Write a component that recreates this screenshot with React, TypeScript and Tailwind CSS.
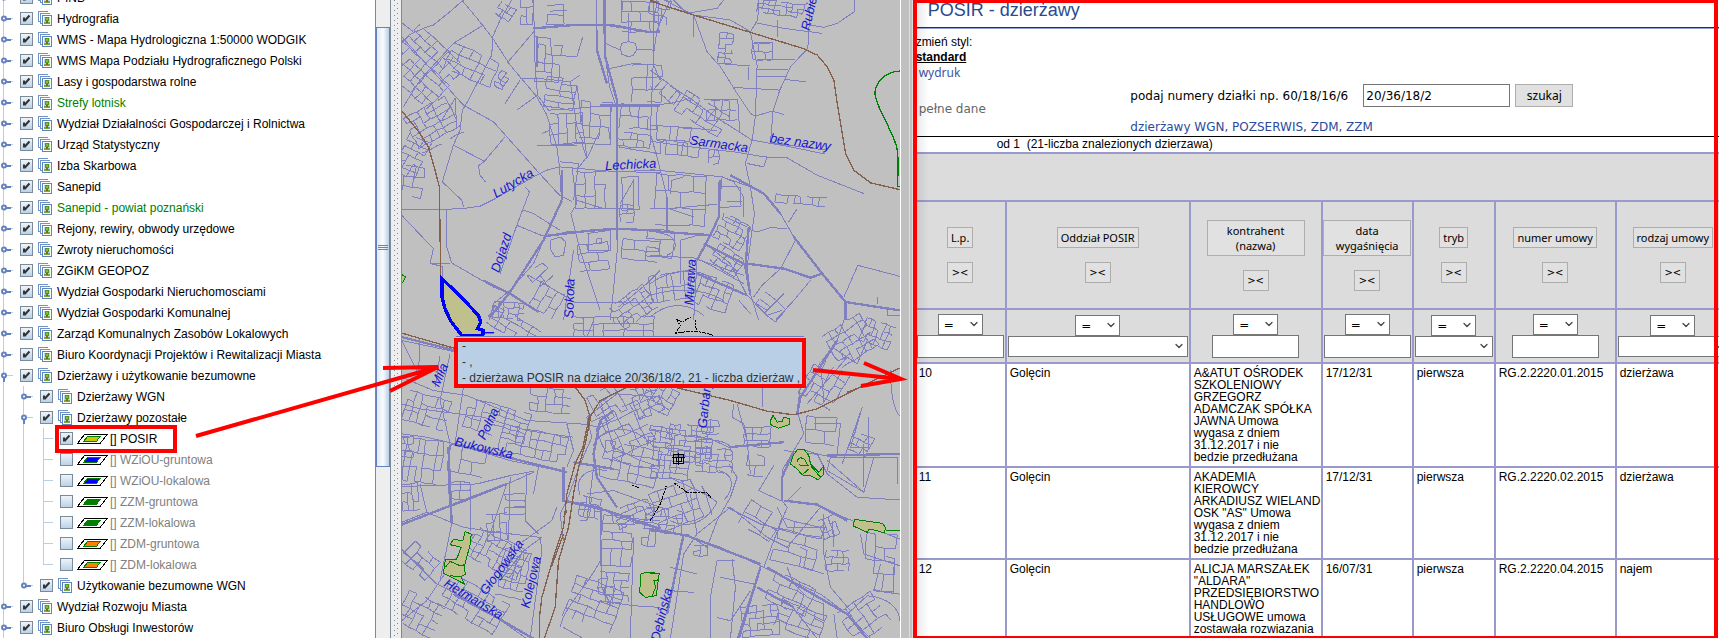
import React from "react";
import { ChevronDown } from "lucide-react";

type TreeItem = {
  label: string;
  depth: 0 | 1 | 2;
  open?: boolean;
  green?: boolean;
  fill?: string;
  off?: boolean;
  last?: boolean;
  marked?: boolean;
};

const tree: TreeItem[] = [
  { label: "PINB", depth: 0 },
  { label: "Hydrografia", depth: 0 },
  { label: "WMS - Mapa Hydrologiczna 1:50000 WODGIK", depth: 0 },
  { label: "WMS Mapa Podziału Hydrograficznego Polski", depth: 0 },
  { label: "Lasy i gospodarstwa rolne", depth: 0 },
  { label: "Strefy lotnisk", depth: 0, green: true },
  { label: "Wydział Działalności Gospodarczej i Rolnictwa", depth: 0 },
  { label: "Urząd Statystyczny", depth: 0 },
  { label: "Izba Skarbowa", depth: 0 },
  { label: "Sanepid", depth: 0 },
  { label: "Sanepid - powiat poznański", depth: 0, green: true },
  { label: "Rejony, rewiry, obwody urzędowe", depth: 0 },
  { label: "Zwroty nieruchomości", depth: 0 },
  { label: "ZGiKM GEOPOZ", depth: 0 },
  { label: "Wydział Gospodarki Nieruchomosciami", depth: 0 },
  { label: "Wydział Gospodarki Komunalnej", depth: 0 },
  { label: "Zarząd Komunalnych Zasobów Lokalowych", depth: 0 },
  { label: "Biuro Koordynacji Projektów i Rewitalizacji Miasta", depth: 0 },
  { label: "Dzierżawy i użytkowanie bezumowne", depth: 0, open: true },
  { label: "Dzierżawy WGN", depth: 1 },
  { label: "Dzierżawy pozostałe", depth: 1, open: true },
  { label: "[] POSIR", depth: 2, fill: "#c8c800", marked: true },
  { label: "[] WZiOU-gruntowa", depth: 2, fill: "#0000ff", off: true },
  { label: "[] WZiOU-lokalowa", depth: 2, fill: "#0000ff", off: true },
  { label: "[] ZZM-gruntowa", depth: 2, fill: "#008000", off: true },
  { label: "[] ZZM-lokalowa", depth: 2, fill: "#008000", off: true },
  { label: "[] ZDM-gruntowa", depth: 2, fill: "#ff8000", off: true },
  { label: "[] ZDM-lokalowa", depth: 2, fill: "#ff8000", off: true, last: true },
  { label: "Użytkowanie bezumowne WGN", depth: 1, last: true },
  { label: "Wydział Rozwoju Miasta", depth: 0 },
  { label: "Biuro Obsługi Inwestorów", depth: 0 },
];

function Guide({ kind, last, open }: { kind: "line" | "node" | "leaf"; last?: boolean; open?: boolean }) {
  return (
    <svg className="h-[21px] w-5 shrink-0" viewBox="0 0 20 21" shapeRendering="crispEdges" aria-hidden="true">
      <path d={last ? "M3.5 0V10.5" : "M3.5 0V21"} stroke="#b8cfe5" />
      {kind !== "line" && <path d="M4 10.5H12.500" stroke="#b8cfe5" />}
      {kind === "node" && (
        <>
          <path d={open ? "M4 12V17" : "M6 10.500H11"} stroke="#6382bf" strokeWidth="2" />
          <circle cx="4" cy="10.500" r="2" fill="#fff" stroke="#6382bf" strokeWidth="2" shapeRendering="auto" />
        </>
      )}
    </svg>
  );
}

function LayersIcon() {
  return (
    <svg className="h-[15px] w-[14px] shrink-0" viewBox="0 0 14 15" shapeRendering="crispEdges" aria-hidden="true">
      <path d="M0.500 10.500V.5H9.500M.5 10.500H2" fill="none" stroke="#6f93c4" />
      <path d="M2.500 12.500V2.500H11.500M2.500 12.500H4" fill="none" stroke="#6f93c4" />
      <rect x="4.500" y="4.500" width="9" height="10" fill="#fff" stroke="#6382bf" />
      <rect x="6" y="6" width="6" height="7" fill="#b9d6f2" />
      <rect x="7" y="6" width="4" height="4" fill="#4d9a1c" />
      <rect x="8" y="7" width="2" height="2" fill="#86c03a" />
      <rect x="6" y="11" width="6" height="2" fill="#6fae3a" />
      <rect x="8" y="10" width="2" height="2" fill="#9a5a1c" />
    </svg>
  );
}

function ParcelIcon({ fill }: { fill: string }) {
  return (
    <svg className="h-[10px] w-[31px] shrink-0" viewBox="0 0 31 10" shapeRendering="crispEdges" aria-hidden="true">
      <path d="M7.500 .5H30L23.500 9H.8Z" fill="#fff" stroke="#000" />
      <path d="M10.500 2.500H23L19.500 7.500H6.500Z" fill={fill} stroke="#008000" />
    </svg>
  );
}

function TreeRow({ item }: { item: TreeItem }) {
  const color = item.off ? "text-[#808080]" : item.green ? "text-[#008000]" : "text-black";
  return (
    <li className="flex h-[21px] items-center">
      {item.depth > 0 && <Guide kind="line" />}
      {item.depth > 1 && <Guide kind="line" />}
      <Guide kind={item.depth === 2 ? "leaf" : "node"} last={item.last} open={item.open} />
      <label className="relative flex items-center">
        <span className="relative flex h-[13px] w-[13px]">
          <input
            type="checkbox"
            defaultChecked={!item.off}
            className="peer h-[13px] w-[13px] appearance-none border border-[#7a8a99] bg-linear-to-b from-[#eef4f9] to-[#bcd2e8]"
          />
          <svg className="pointer-events-none absolute inset-0 hidden peer-checked:block" viewBox="0 0 13 13" aria-hidden="true">
            <path d="M4 5.500V9.500M4.500 9 9.500 3.500" fill="none" stroke="#333" strokeWidth="2" />
          </svg>
        </span>
        <span className={item.fill ? "ml-1" : "ml-[5px]"}>{item.fill ? <ParcelIcon fill={item.fill} /> : <LayersIcon />}</span>
        <span className={`${item.fill ? "ml-0.5" : "ml-[5px]"} whitespace-nowrap ${color}`}>{item.label}</span>
        {item.marked && <span className="pointer-events-none absolute -top-1.5 -right-5 -bottom-1.5 -left-[5px] border-4 border-[#ff0000]" />}
      </label>
    </li>
  );
}

type Block = [cx: number, cy: number, w: number, h: number, angle: number, nx: number, ny: number];

// Builds a patch of side streets: a rotated grid in which some segments are left out.
function streets([cx, cy, w, h, angle, nx, ny]: Block): string {
  const a = (angle * Math.PI) / 180;
  const point = (i: number, j: number) => {
    const wob = ((i * 7 + j * 13 + nx) % 5) - 2;
    const x = (i / nx - 0.5) * w + wob;
    const y = (j / ny - 0.5) * h - wob;
    return `${Math.round(cx + x * Math.cos(a) - y * Math.sin(a))} ${Math.round(cy + x * Math.sin(a) + y * Math.cos(a))}`;
  };
  let d = "";
  for (let i = 0; i <= nx; i++) {
    for (let j = 0; j <= ny; j++) {
      const k = (i * 31 + j * 17 + i * j * 5 + Math.abs(cx)) % 7;
      if (i < nx && k !== 0) d += `M${point(i, j)}L${point(i + 1, j)}`;
      if (j < ny && k !== 3 && k !== 5) d += `M${point(i, j)}L${point(i, j + 1)}`;
    }
  }
  return d;
}

const northWest: Block[] = [
  [70, 200, 190, 170, 43, 8, 7], [215, 195, 150, 80, 25, 5, 3], [100, 375, 140, 120, -28, 6, 6], [35, 470, 70, 120, 25, 3, 6],
  [40, 545, 60, 90, 8, 2, 3], [380, 35, 36, 76, 0, 2, 3], [315, 35, 50, 40, 30, 3, 2], [305, 240, 30, 50, 30, 2, 4],
  [465, 45, 50, 60, 0, 1, 2], [720, 50, 110, 90, 0, 4, 3], [445, 190, 70, 110, 5, 3, 4], [480, 280, 90, 90, 8, 2, 5],
  [500, 385, 100, 90, -3, 4, 3], [585, 360, 90, 110, 4, 3, 3], [715, 350, 110, 70, 3, 4, 2], [700, 420, 100, 40, 5, 5, 2],
  [570, 570, 90, 110, 0, 3, 3], [690, 580, 50, 100, 0, 1, 2], [420, 825, 60, 50, -40, 2, 2], [325, 930, 90, 50, 5, 6, 3],
  [700, 920, 120, 80, -35, 6, 4], [440, 900, 80, 80, -60, 3, 3], [580, 770, 90, 80, -5, 3, 3], [680, 640, 40, 50, 0, 2, 2],
  [720, 750, 110, 60, 5, 3, 2], [740, 250, 90, 110, 0, 2, 3],
];
const northEast: Block[] = [
  [390, 25, 140, 40, 8, 8, 3], [225, 145, 40, 90, 5, 2, 6], [335, 155, 60, 50, 0, 3, 2], [155, 340, 150, 70, 32, 6, 3],
  [60, 400, 120, 40, 5, 6, 1], [80, 445, 130, 40, 5, 8, 1], [215, 330, 90, 60, 0, 4, 2], [90, 600, 150, 150, 2, 4, 3],
  [245, 695, 90, 80, 28, 5, 4], [240, 590, 60, 60, 0, 2, 1], [190, 880, 100, 90, 20, 5, 3], [60, 860, 120, 80, -8, 7, 2],
  [450, 600, 150, 24, 5, 8, 1], [25, 35, 60, 70, 10, 3, 3], [45, 270, 90, 40, 38, 5, 1], [230, 780, 90, 60, 35, 5, 3],
  [360, 920, 80, 50, 40, 2, 2], [190, 470, 30, 40, 0, 2, 2], [30, 730, 80, 80, 5, 2, 3],
];
const southWest: Block[] = [
  [80, 270, 130, 90, 16, 6, 3], [60, 420, 130, 130, 8, 7, 3], [290, 300, 190, 90, 16, 8, 3], [400, 370, 200, 80, 12, 9, 3],
  [670, 330, 150, 130, -25, 6, 5], [690, 430, 170, 110, 12, 6, 4], [620, 250, 90, 90, -30, 4, 3], [450, 240, 120, 70, 5, 5, 3],
  [200, 420, 110, 80, 10, 3, 2], [30, 530, 50, 80, -5, 3, 3], [345, 550, 60, 60, 0, 1, 3], [290, 620, 60, 80, -3, 3, 3],
  [180, 510, 60, 50, 0, 2, 2], [290, 700, 170, 90, 28, 9, 4], [220, 850, 190, 100, 30, 8, 4], [60, 720, 100, 70, 40, 4, 3],
  [60, 880, 120, 100, 28, 5, 4], [340, 760, 80, 140, 12, 4, 6], [580, 850, 150, 130, 20, 5, 5], [650, 660, 90, 150, 3, 3, 6],
  [640, 800, 90, 90, 3, 4, 4], [700, 580, 110, 60, -20, 5, 4], [740, 240, 80, 90, -20, 4, 4], [570, 560, 60, 60, 10, 4, 3],
  [640, 20, 240, 60, 0, 8, 3], [340, 20, 160, 60, 30, 5, 3], [745, 650, 40, 50, 5, 2, 2], [20, 380, 40, 60, 0, 3, 3],
];
const southEast: Block[] = [
  [120, 370, 130, 110, 4, 8, 7], [60, 430, 110, 90, 5, 6, 5], [190, 420, 110, 70, 2, 5, 4], [30, 350, 70, 60, 8, 4, 4],
  [90, 550, 160, 120, -20, 6, 4], [40, 600, 110, 70, 8, 5, 3], [600, 60, 130, 110, -32, 6, 5], [520, 190, 120, 110, -60, 5, 4],
  [680, 40, 90, 70, 20, 6, 3], [510, 330, 90, 80, 5, 3, 2], [320, 350, 80, 60, 0, 3, 3], [315, 435, 50, 60, 5, 2, 2],
  [330, 600, 110, 80, 30, 3, 2], [440, 670, 130, 130, 15, 3, 4], [535, 620, 50, 60, -20, 3, 3], [560, 720, 70, 60, 0, 4, 3],
  [630, 370, 60, 60, 25, 3, 3], [690, 680, 90, 80, 5, 3, 2], [420, 820, 130, 90, 25, 5, 3], [330, 900, 110, 90, -5, 5, 5],
  [450, 900, 140, 80, 20, 4, 4], [640, 890, 120, 110, -35, 4, 4], [70, 110, 120, 90, 10, 4, 3], [30, 230, 90, 80, 30, 4, 4],
  [180, 320, 50, 40, 0, 2, 2], [700, 760, 60, 100, 5, 2, 2], [150, 690, 40, 30, 0, 2, 2],
];

const roads = {
  northWest: [
    "M190 0 150 35 100 75 70 85 30 103 5 125M5 68 40 95M185 0 235 60 278 115 330 195 410 290 440 345 455 395 470 440 478 500 484 600",
    "M335 0 300 60 278 110 275 165 205 300 187 330 180 390 160 435 127 545M250 75 160 130 60 240 10 320M405 90 350 155 320 190M5 110 190 315 280 365 418 520 478 585 515 603",
    "M160 435 253 483 315 410M253 483 235 497 240 525 256 545M127 545 185 600 190 620M5 628 180 626 240 618 280 598 400 530 440 510 478 500 560 507 610 512 780 518",
    "M140 628V740L155 788 90 790M155 788 280 860 330 880 415 935M5 645 100 745 90 790 128 798V830M375 560 388 575 350 675 300 820M365 628 400 640 480 690M350 675 430 708",
    "M478 500 484 600 430 720 400 790 330 870 280 910 268 960M515 500 530 610 512 640 540 750 570 840 600 930M440 710 500 695 640 688 780 690M360 235 415 235 510 245 540 225",
    "M400 0 405 200 412 285 350 330M412 285 445 330 530 325 600 318M360 240 315 310M450 390 425 400M478 435 540 430 630 433V320M545 430 560 475 595 400",
    "M530 255 560 470 530 510M510 245 530 380 550 430M480 485 535 490 520 600M405 110 450 115 455 165 530 170 548 110M450 35 470 30 500 32M590 90 590 0M610 0 612 150 628 260 648 320",
    "M665 0V40M685 40V125M665 130 685 125 705 130 710 148 700 165 685 170 665 163 660 145 665 130M615 130 660 150M710 148 760 150V0M630 205 700 190 760 195 780 240M610 75 740 95 780 92",
    "M650 320 652 740 636 905 630 960M410 435H530M560 700 630 690V750H565V700M590 715H605V730H590V715M450 720 480 710 497 725 490 765 465 770 450 745V720M520 905H780M655 920 740 850 780 810M125 360 165 295 170 380",
    "M530 600 610 625 700 625M660 610 700 540V625M655 440 710 450 780 460M520 750 490 960M385 825 430 850 500 890M700 510H780",
  ],
  northEast: [
    "M60 0 20 90 10 160 0 400 20 470 50 590M130 45 170 155 210 200 260 280 300 340 315 348 365 333 400 343M325 0 322 60 300 95 320 195 315 348 305 420 285 490 300 560 312 640 290 800 300 880 325 960",
    "M40 0 130 45 240 60 300 95M70 0 110 40 200 25 220 0M315 68 400 85 515 100M480 0 472 145 420 200 388 270 368 333 360 428M612 0V35L560 70 520 82 480 75",
    "M300 198 200 190M310 128H365V178M320 178H435M316 207H412M320 228H405M405 238 465 245M248 262 388 270M295 200V240M0 210 80 270 120 295 180 340 305 420M0 315 60 310 120 295M160 297H262L268 400",
    "M0 375 120 383 200 392M0 423 120 440 250 455 340 470 410 473 500 525 640 580M305 420 420 440 525 462M360 428 530 450M290 490 340 500 350 470",
    "M0 508 100 518 215 530 300 560 345 585 390 640 430 710 515 820 585 905M50 590 52 690M215 530 205 650 180 705 140 780 130 960M60 580 65 540 100 530M0 625H55L200 612",
    "M290 685 320 695 360 682 410 685M415 665 440 625M435 720 390 805 335 855 310 890M165 730 240 790 290 885 350 945 395 930M480 840 430 900 375 960M310 905 350 930 400 880M580 890 622 795 747 828",
    "M0 765 130 773 280 825M150 780 190 800 280 850M0 850C60 805 140 800 185 835M0 885C80 860 160 865 220 900M0 950C50 905 110 905 160 945M160 700 90 720V850M30 700C80 700 90 750 50 765M265 900 300 940M680 890V912M710 930V945H747",
    "M215 530 250 545 280 590V650M225 650 290 680M130 48V110M380 60V110M230 605H275M55 625 130 650",
  ],
  southWest: [
    "M5 340 80 350 165 370 330 420 500 455M5 498 230 490 330 465 400 452M5 610 200 540 300 500 400 455M5 605 80 575 190 620 290 635 420 650M150 100 120 240 150 370 145 500 155 610 120 780M190 200 165 370",
    "M5 170 100 210 200 225 380 300 540 310 600 320M5 685 60 740 110 790 180 825 290 890 380 954M420 650 425 690 390 954M425 650 370 690 300 780M470 560 455 600 365 665M380 455 375 600 415 640M330 470 325 660 380 690",
    "M210 490V630M320 560H375M320 490 270 640M60 490 80 575M5 250 60 265 250 290 380 330 520 350M560 290 575 350 540 430 500 540 480 580 490 660M500 540 600 560 650 590 780 625M600 560 605 800 630 850",
    "M560 290 650 220 780 230M600 240 640 380 720 420 780 440M580 375C600 320 700 300 760 380M640 410C680 440 740 450 780 430M540 525C520 470 560 440 620 450M580 440 560 600 540 600M650 590 780 600",
    "M480 920C490 860 560 800 600 720L605 560M490 920 550 954M600 840 700 855 780 860M690 954 700 650M560 520 640 510 780 560M400 520 415 440M500 310 520 390 500 440M5 900 80 840 120 780 220 640",
    "M580 0 560 50 600 140 780 170M5 60 170 95M5 60 60 170M60 55 55 170M120 105 105 200",
  ],
  southEast: [
    "M0 325 100 345 180 355 235 380M235 430 260 470 240 530 200 600 170 680 110 640M0 630 110 645 210 680 330 735M330 735 400 770 510 820 590 880 660 954M400 390 530 405 747 400M530 420 640 515 670 410M580 0 560 60 500 140",
    "M460 140 450 200 440 270 460 340 430 390 395 450 395 540 410 560 370 660 340 740M450 385 500 400 530 460 620 530 747 538M400 540 500 550 580 590 747 655M260 250 290 360 300 460M370 435 325 510 390 540",
    "M120 520 140 640 100 700 60 954M330 735 260 954M140 640 240 560 350 650 410 680 510 560M230 560 330 610 440 640 515 650M245 715 255 800 240 954M255 720 200 720 180 830 180 954M520 580V700L540 800 600 870",
    "M575 430 635 260M635 260 600 380H655V290M640 370V500M490 310 570 310 560 400M540 410H740V490M540 410 530 450 640 515M545 600 550 680M630 640 640 700 747 735M690 730 670 810 747 820M730 740V820",
    "M450 500 410 540M320 800 420 850 500 954M300 810 240 900 200 890M210 770 310 790M60 740 140 760M60 810 130 815M590 880 650 825C720 830 747 870 747 900M550 880 560 954M410 740 430 790 470 830 520 850V900L440 860",
    "M335 200V260M720 150C720 250 740 280 747 285M250 250 245 290 280 310 290 350M510 130 520 240M590 110 470 250M545 80 620 130 650 60M380 560 410 620 530 620M450 680 470 690 460 740 520 760",
    "M130 360C200 350 250 370 240 390M240 380 380 365M205 450C250 460 255 500 220 540M60 470C110 500 160 510 200 545M200 545C160 620 100 620 60 600",
  ],
};

const mainRoads = {
  northWest: ["M400 85 520 75 640 76 740 95 780 96", "M410 110V200", "M590 90V150L620 250", "M615 0V170L650 300V720", "M600 316H780", "M650 685 560 692 430 708", "M485 600 430 720 330 875 270 950", "M650 685 780 692", "M485 510V600", "M250 840 330 880 415 935"],
  northEast: ["M0 692 180 705", "M50 590V690", "M208 540 205 650 180 705 140 780", "M140 820 290 885", "M290 790 400 805 480 832 515 820", "M430 710 515 820 585 905 747 930", "M585 905V960", "M295 680 285 800 300 885", "M160 730 290 795", "M240 525 340 580 390 640"],
  southWest: ["M5 50 165 90", "M165 370 500 455", "M5 612 190 540 320 490", "M490 440V540L620 570 780 625", "M640 270 600 300 580 400 590 470 650 560", "M145 380 155 610", "M160 820 290 890 400 954", "M520 425 640 445"],
  southEast: ["M0 625 110 645 330 730", "M235 380 400 365", "M530 405 747 400", "M400 540 500 552 590 600", "M330 740 265 954", "M560 60 450 230 440 280", "M395 540V470L430 390", "M350 740 590 880 650 954", "M100 640 50 880", "M320 800 430 860"],
};

const rails = [
  { t: "translate(400 0) scale(.3333)", d: "M5 332 60 400 85 440 105 510 118 560 122 830M750 0 780 12" },
  { t: "translate(650 0) scale(.3333)", d: "M0 3 120 42 300 97 460 146 500 165 530 200 550 240 560 310 575 400 585 460 610 510 660 548 747 568" },
  { t: "translate(400 320) scale(.3333)", d: "M5 38 165 84M525 200 555 240 568 285 548 380 525 430 500 520 490 620 460 710 425 830 418 890V954M680 200 600 240 572 285 555 370 535 440 520 520 505 620 475 720 465 860 432 954M500 570 490 590M490 640 455 735" },
  { t: "translate(650 320) scale(.3333)", d: "M80 202 240 240 350 272 430 283 500 265 590 220 680 175 747 143M590 215 660 190" },
];

const labels: [string, number, number, number][] = [
  ["Lutycka", 496, 198, -31], ["Lechicka", 605, 170, -3], ["Dojazd", 499, 273, -72], ["Sokoła", 573, 318, -88], ["Rubież", 809, 31, -77],
  ["Sarmacka", 689, 144, 8], ["bez nazwy", 769, 142, 8], ["Murawa", 693, 305, -87], ["Miła", 439, 387, -67], ["Polna", 485, 440, -65],
  ["Bukowska", 454, 445, 13], ["Głogowska", 486, 595, -54], ["Kolejowa", 529, 608, -77], ["Hetmańska", 443, 585, 31], ["Dębińska", 659, 641, -76], ["Garbary", 706, 428, -84],
];

const tiles = [
  { x: 400, y: 0, blocks: northWest, minor: roads.northWest, major: mainRoads.northWest },
  { x: 650, y: 0, blocks: northEast, minor: roads.northEast, major: mainRoads.northEast },
  { x: 400, y: 320, blocks: southWest, minor: roads.southWest, major: mainRoads.southWest },
  { x: 650, y: 320, blocks: southEast, minor: roads.southEast, major: mainRoads.southEast },
];

function CityMap() {
  return (
    <svg className="absolute inset-0 h-full w-full" viewBox="402 0 497 638" preserveAspectRatio="xMinYMin slice" role="img" aria-label="Mapa">
      <g fill="none" stroke="#8080c0" shapeRendering="crispEdges">
        {tiles.map((t) => (
          <g key={`${t.x}-${t.y}`} transform={`translate(${t.x} ${t.y}) scale(.3333)`}>
            <path strokeWidth="3" d={t.blocks.map(streets).join("") + t.minor.join("")} />
            <path strokeWidth="7" d={t.major.join("")} />
          </g>
        ))}
      </g>
      <g fill="none" stroke="#84604e" shapeRendering="crispEdges">
        {rails.map((r) => (
          <path key={r.t} transform={r.t} strokeWidth="4" d={r.d} />
        ))}
      </g>
      <g fill="#c0c08c" stroke="#008000" strokeWidth="3" shapeRendering="crispEdges">
        <g transform="translate(400 320) scale(.3333)">
          <path d="M195 633 213 640 212 665 192 740 196 760 182 768 193 790 165 775 130 758 136 715 170 715 183 680 150 672 160 656 188 660Z" />
          <path d="M136 740 150 722 180 735 195 732M150 765 182 768" fill="none" />
          <path d="M722 760 740 754 765 757 775 760 773 785 768 825 735 830 718 815Z" />
        </g>
        <g transform="translate(650 320) scale(.3333)">
          <path d="M0 757H28L22 778H10L16 800 5 826H0M368 284 380 305 395 302 400 290 417 294 418 312 385 323 362 314 360 300Z" />
          <path d="M440 388H462L475 405 480 430 505 455 518 438 520 460 503 478 480 465 455 463 440 445 420 430 428 405Z" />
          <path d="M440 425C440 405 465 410 468 428L475 435 445 433M455 463 475 445M480 435 510 470" fill="none" />
          <path d="M612 596 660 603 695 608 706 622 700 637 680 630 655 625 650 635 608 616Z" />
          <path d="M706 630H747" strokeWidth="5" />
        </g>
        <path transform="translate(650 0) scale(.3333)" fill="none" strokeWidth="4" d="M747 213C700 215 674 250 673 280 680 330 710 360 735 430 745 450 743 520 740 558H747" />
        <path transform="translate(400 0) scale(.3333)" d="M5 822 16 830 8 848" />
      </g>
      <g fill="none" stroke="#000" strokeDasharray="6 2" shapeRendering="crispEdges" strokeWidth="3">
        <path transform="translate(650 320) scale(.3333)" d="M75 40C110 30 150 30 188 45M80 0 90 15 75 40M135 0 138 35M72 488 110 515 170 517 182 532M48 495 30 550 0 600" />
        <path transform="translate(650 320) scale(.3333)" strokeDasharray="none" d="M70 402H100V430H70ZM78 410H92V424H78ZM66 410H104M85 398V434" />
        <path transform="translate(650 0) scale(.3333)" d="M76 955 95 965 120 950" />
        <path transform="translate(400 320) scale(.3333)" d="M696 495 720 502" />
      </g>
      <path
        transform="translate(400 0) scale(.3333)"
        fill="#c0c08c"
        stroke="#0000ff"
        strokeWidth="10"
        shapeRendering="crispEdges"
        d="M126 835V890L135 925 152 962 185 1005 H248 L250 990 232 985 242 965 235 945 185 892Z"
      />
      <path transform="translate(400 0) scale(.3333)" d="M245 997H282" stroke="#0000ff" strokeWidth="4" />
      <g className="font-['Liberation_Sans',sans-serif] text-[13px] italic" fill="#1414d2">
        {labels.map(([text, x, y, a]) => (
          <text key={text} transform={`translate(${x} ${y}) rotate(${a})`}>
            {text}
          </text>
        ))}
      </g>
    </svg>
  );
}

type Column = { title: string; narrow?: boolean; list?: boolean; width: string };

const columns: Column[] = [
  { title: "L.p.", width: "w-[91px]" },
  { title: "Oddział POSIR", list: true, width: "w-[184px]" },
  { title: "kontrahent (nazwa)", narrow: true, width: "w-[132px]" },
  { title: "data wygaśnięcia", narrow: true, width: "w-[91px]" },
  { title: "tryb", list: true, width: "w-[82px]" },
  { title: "numer umowy", width: "w-[121px]" },
  { title: "rodzaj umowy", list: true, width: "w-auto" },
];

const rows = [
  ["10", "Golęcin", "A&ATUT OŚRODEK SZKOLENIOWY GRZEGORZ ADAMCZAK SPÓŁKA JAWNA Umowa wygasa z dniem 31.12.2017 i nie bedzie\u00a0przedłużana", "17/12/31", "pierwsza", "RG.2.2220.01.2015", "dzierżawa"],
  ["11", "Golęcin", "AKADEMIA KIEROWCY ARKADIUSZ WIELAND OSK \"AS\" Umowa wygasa z dniem 31.12.2017 i nie bedzie\u00a0przedłużana", "17/12/31", "pierwsza", "RG.2.2220.02.2015", "dzierżawa"],
  ["12", "Golęcin", "ALICJA MARSZAŁEK \"ALDARA\" PRZEDSIĘBIORSTWO HANDLOWO USŁUGOWE umowa zostawała rozwiazania z dniem 31.07.2016", "16/07/31", "pierwsza", "RG.2.2220.04.2015", "najem"],
];

function Picker({ label, wide }: { label: string; wide?: boolean }) {
  return (
    <span className={`relative block h-[21px] ${wide ? "w-full" : "w-[45px]"}`}>
      <select aria-label={label} className="h-full w-full appearance-none border border-[#767676] bg-white pl-[5px] font-['DejaVu_Sans',sans-serif] text-xs text-black">
        <option>{wide ? "" : "="}</option>
      </select>
      <ChevronDown className="pointer-events-none absolute top-1 right-[3px] h-3 w-3 text-[#444]" strokeWidth={2.5} />
    </span>
  );
}

const tableButton = "border border-[#adadad] bg-[#e1e1e1] leading-[15px] text-black";

function LeaseTable() {
  return (
    <table className="w-[calc(100%+12px)] table-fixed border-collapse text-xs leading-3">
      <colgroup>
        {columns.map((c) => (
          <col key={c.title} className={c.width} />
        ))}
      </colgroup>
      <thead className="bg-[#dcdcdc]">
        <tr>
          <td colSpan={7} className="h-12 border-2 border-[#9999cc]" />
        </tr>
        <tr className="h-[108px]">
          {columns.map((c) => (
            <th key={c.title} scope="col" className="border-2 border-[#9999cc] p-0 font-normal">
              <div className="flex flex-col items-center gap-3.5">
                <button
                  type="button"
                  className={`${tableButton} font-['Noto_Sans',sans-serif] text-[11px] ${c.narrow ? "mx-0.5 max-w-[98px] min-w-[85px] px-3 py-0.5" : "px-[3px] py-0.5 whitespace-nowrap"}`}
                >
                  {c.title}
                </button>
                <button type="button" className={`${tableButton} w-[26px] py-0.5 font-['DejaVu_Sans',sans-serif] text-[10px]`}>
                  &gt;&lt;
                </button>
              </div>
            </th>
          ))}
        </tr>
        <tr className="h-[54px]">
          {columns.map((c) => (
            <td key={c.title} className="border-2 border-[#9999cc] px-px py-0">
              <div className="flex flex-col items-center">
                <Picker label={`Warunek: ${c.title}`} />
                {c.list ? (
                  <Picker wide label={c.title} />
                ) : (
                  <input type="text" aria-label={c.title} className="h-[23px] w-full max-w-[87px] border border-[#767676] bg-white px-1" />
                )}
              </div>
            </td>
          ))}
        </tr>
      </thead>
      <tbody>
        {rows.map((r) => (
          <tr key={r[0]}>
            {r.map((cell, i) => (
              <td key={i} className="border-2 border-[#9999cc] py-[3px] pr-0 pl-[3px] align-top">
                {cell}
              </td>
            ))}
          </tr>
        ))}
      </tbody>
    </table>
  );
}

export default function App() {
  return (
    <div className="relative flex h-screen overflow-hidden bg-white font-['Liberation_Sans',sans-serif] text-xs text-black">
      <nav className="w-[375px] shrink-0 overflow-hidden" aria-label="Warstwy">
        <ul className="-mt-[13px]">
          {tree.map((item) => (
            <TreeRow key={item.label} item={item} />
          ))}
        </ul>
      </nav>

      <div className="flex w-4 shrink-0 flex-col border-x border-[#7a8a99] bg-[#eeeeee]">
        <div className="basis-[27px]" />
        <div className="flex h-[69%] flex-col items-center justify-center gap-px border border-[#6382bf] bg-linear-to-r from-[#dfe9f4] via-[#fafcfe] to-[#b8cfe5]">
          <span className="h-px w-2.5 bg-[#6382bf]" />
          <span className="h-px w-2.5 bg-[#6382bf]" />
          <span className="h-px w-2.5 bg-[#6382bf]" />
        </div>
      </div>
      <div className="flex w-2.5 shrink-0 justify-end bg-[#eeeeee] pr-0.5">
        <svg className="h-full w-[5px]" shapeRendering="crispEdges" aria-hidden="true">
          <pattern id="grip" width="5" height="5" patternUnits="userSpaceOnUse">
            <rect width="1" height="1" fill="#7a8a99" />
            <rect x="3" y="3" width="1" height="1" fill="#7a8a99" />
          </pattern>
          <rect width="100%" height="100%" fill="url(#grip)" />
        </svg>
      </div>

      <main className="relative flex-[498_1_0%] overflow-hidden border-l border-[#7a8a99] bg-[#c0c0c0]">
        <CityMap />
        <div className="absolute top-[336px] left-[54px] flex">
          <p className="border-t border-[#6382bf] bg-[#b8cfe5] pt-px pr-1 pl-1.5 leading-4 whitespace-nowrap text-[#333333]">
            -<br />- ,<br />- dzierżawa POSIR na działce 20/36/18/2, 21 - liczba dzierżaw ,
          </p>
          <div className="absolute top-0.5 -right-0.5 -bottom-0.5 -left-0.5 border-4 border-[#ff0000]" />
        </div>
      </main>
      <div className="w-[13px] shrink-0 border-l border-white bg-[#c0c0c0]">
        <div className="ml-2 h-full border-x border-[#dddddd]" />
      </div>

      <section className="relative flex-[807_1_0%] overflow-hidden bg-white">
        <header className="flex h-[29px] flex-col justify-end border-b border-[#8fa4d0]">
          <h1 className="border-b border-[#1c2f66] pb-[7px] pl-[15px] text-lg leading-5 text-[#2a4a8c]">POSIR - dzierżawy</h1>
        </header>
        <div className="flex h-[108px] border-b border-black">
          <div className="flex w-[27%] flex-col items-start pt-[5px] pl-[3px] leading-4">
            <span>zmień styl:</span>
            <a href="#standard" className="leading-[15px] font-bold underline">
              standard
            </a>
            <a href="#wydruk" className="pl-[3px] font-['Noto_Sans',sans-serif] text-[#3c55a5]">
              wydruk
            </a>
            <span className="mt-5 pl-[3px] font-['DejaVu_Sans',sans-serif] text-[#666666]">pełne dane</span>
          </div>
          <form className="flex flex-col items-start gap-3 pt-[55px] font-['DejaVu_Sans',sans-serif] text-xs" onSubmit={(e) => e.preventDefault()}>
            <div className="flex items-center gap-[5px]">
              <label htmlFor="parcel" className="w-[228px] whitespace-nowrap">
                podaj numery działki np. 60/18/16/6
              </label>
              <input id="parcel" type="text" defaultValue="20/36/18/2" className="h-[23px] w-[147px] border border-[#767676] bg-white px-0.5" />
              <button type="submit" className="h-[23px] w-[58px] border border-[#adadad] bg-[#e1e1e1] font-['Noto_Sans',sans-serif]">
                szukaj
              </button>
            </div>
            <a href="#dzierzawy" className="leading-4 text-[#2c4a9c]">
              dzierżawy WGN, POZSERWIS, ZDM, ZZM
            </a>
          </form>
        </div>
        <p className="h-[15px] pl-[84px] leading-[15px] whitespace-pre">od 1  (21-liczba znalezionych dzierzawa)</p>
        <div className="pl-px">
          <LeaseTable />
        </div>
        <div className="pointer-events-none absolute inset-y-0 right-px left-0 border-4 border-t-3 border-b-2 border-[#ff0000]" />
        <div className="pointer-events-none absolute inset-y-0 left-1 w-3 bg-linear-to-r from-black/8 to-transparent" />
      </section>

      <svg className="pointer-events-none absolute top-0 left-0" width="1719" height="638" viewBox="0 0 1719 638" fill="none" stroke="#ff0000" strokeWidth="4" aria-hidden="true">
        <path d="M196 436 438 367M383 368 438 367 390 391" />
        <path d="M813 370 901 379M864 363 901 379 861 386" />
      </svg>
    </div>
  );
}
